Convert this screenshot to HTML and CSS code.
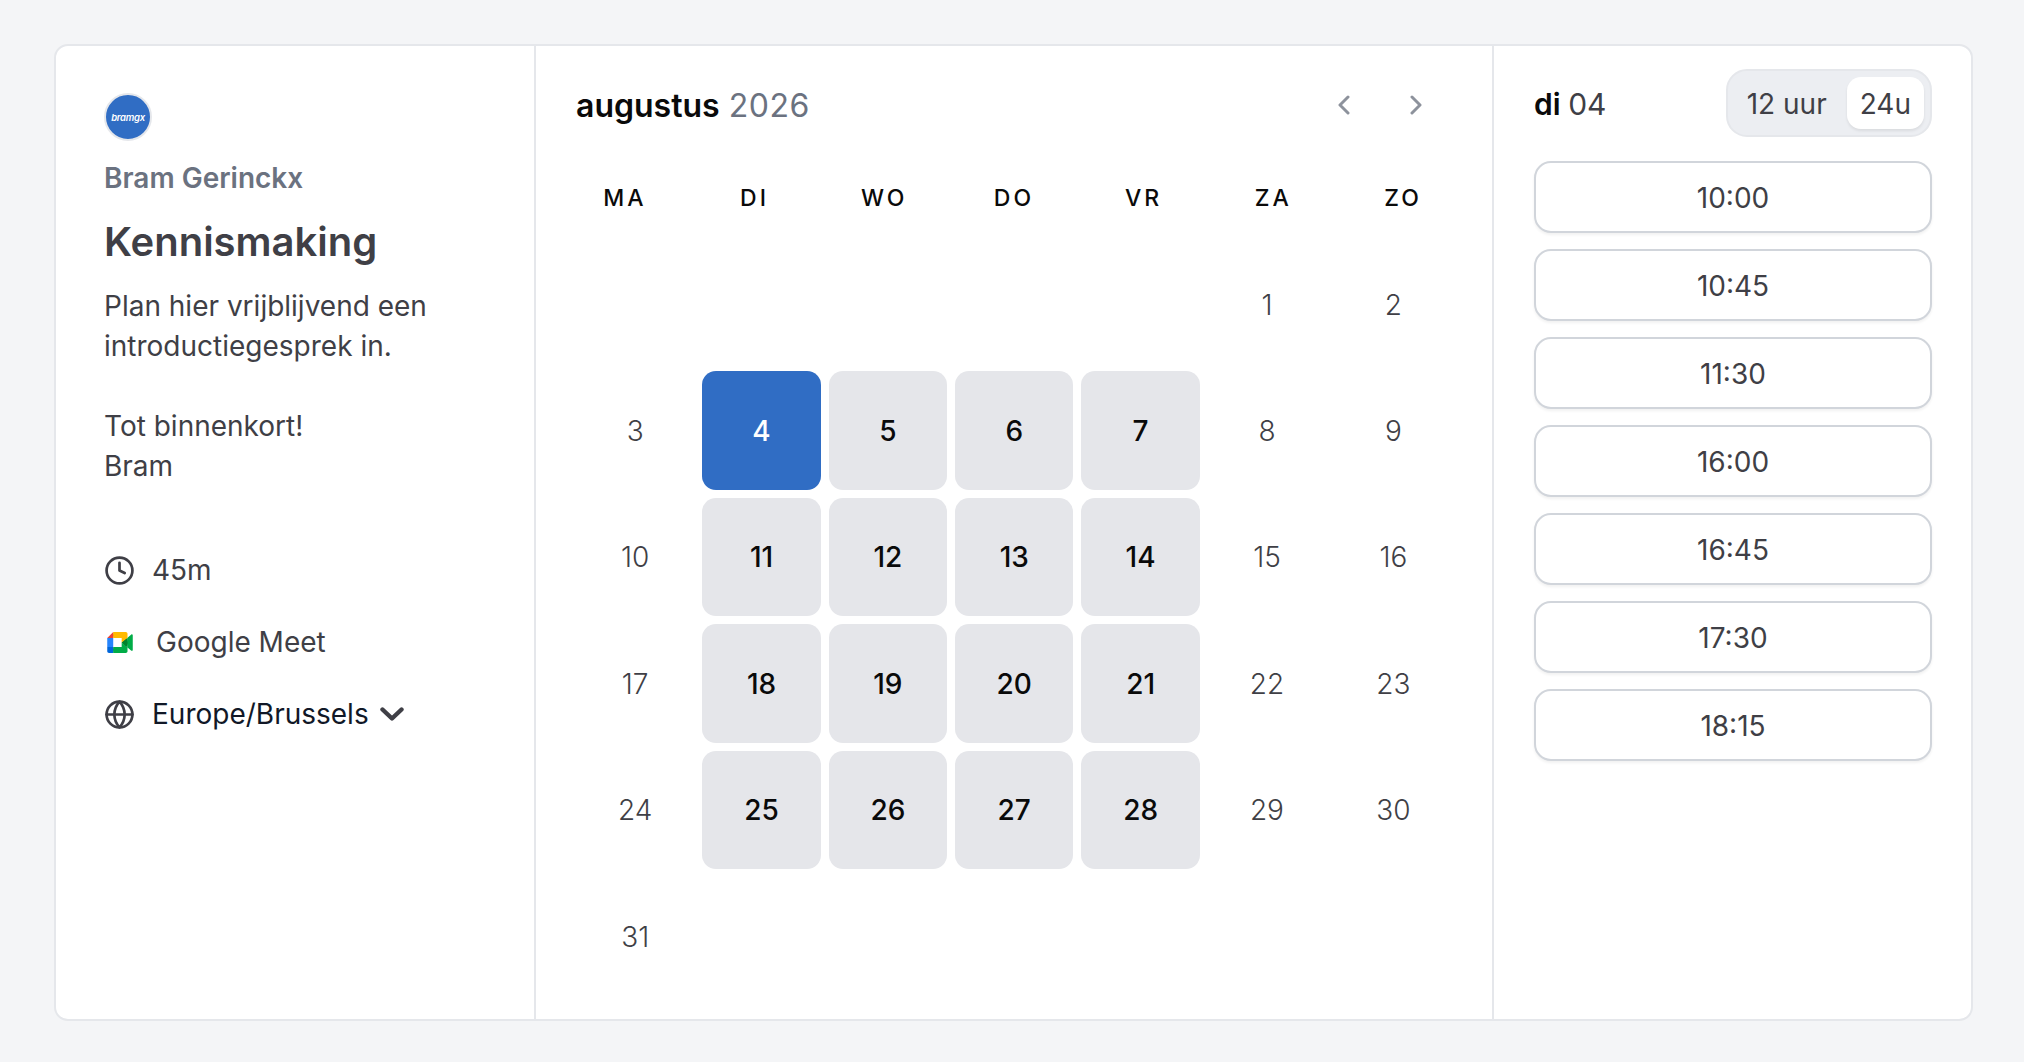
FILE: index.html
```html
<!DOCTYPE html>
<html lang="nl">
<head>
  <meta charset="UTF-8">
  <meta name="viewport" content="width=device-width, initial-scale=1.0">
  <title>Kennismaking - Bram Gerinckx</title>
  <link rel="stylesheet" href="styles.css">
</head>
<body>
  <div class="booker">
    <!-- event info -->
    <aside class="info">
      <div class="avatar"><span>bramgx</span></div>
      <p class="host">Bram Gerinckx</p>
      <h1>Kennismaking</h1>
      <div class="desc">
        <p>Plan hier vrijblijvend een introductiegesprek in.</p>
        <p>Tot binnenkort!<br>Bram</p>
      </div>
      <ul class="meta">
        <li>
          <svg class="icon" viewBox="0 0 24 24" fill="none" stroke="currentColor" stroke-width="2.1" stroke-linecap="round" stroke-linejoin="round"><circle cx="12" cy="12" r="10"/><path d="M12 6v6l4 2"/></svg>
          <span>45m</span>
        </li>
        <li class="meet">
          <svg class="meet-icon" viewBox="0 0 87.5 72"><path fill="#00832d" d="M49.5 36l8.53 9.75 11.47 7.33 2-17.02-2-16.64-11.69 6.44z"/><path fill="#0066da" d="M0 51.5V66c0 3.315 2.685 6 6 6h14.5l3-10.96-3-9.54-9.95-3z"/><path fill="#e94235" d="M20.5 0L0 20.5l10.55 3 9.95-3 2.95-9.41z"/><path fill="#2684fc" d="M20.5 20.5H0v31h20.5z"/><path fill="#00ac47" d="M82.6 8.68L69.5 19.42v33.66l13.16 10.79c1.97 1.54 4.85.135 4.85-2.37V11c0-2.535-2.945-3.925-4.91-2.32zM49.5 36v15.5h-29V72h43c3.315 0 6-2.685 6-6V53.08z"/><path fill="#ffba00" d="M63.5 0h-43v20.5h29V36l20-16.57V6c0-3.315-2.685-6-6-6z"/></svg>
          <span>Google Meet</span>
        </li>
        <li class="tz">
          <svg class="icon" viewBox="0 0 24 24" fill="none" stroke="currentColor" stroke-width="2.1" stroke-linecap="round" stroke-linejoin="round"><circle cx="12" cy="12" r="10"/><path d="M2 12h20"/><path d="M12 2a15.3 15.3 0 0 1 4 10 15.3 15.3 0 0 1-4 10 15.3 15.3 0 0 1-4-10 15.3 15.3 0 0 1 4-10z"/></svg>
          <span>Europe/Brussels</span>
          <svg class="tz-caret" viewBox="0 0 24 14" fill="none" stroke="currentColor" stroke-width="4.4" stroke-linecap="round" stroke-linejoin="round"><path d="M2.5 2.5 12 11.5l9.5-9"/></svg>
        </li>
      </ul>
    </aside>

    <!-- month -->
    <main class="month">
      <div class="month-head">
        <h2>augustus <span>2026</span></h2>
        <div class="month-nav">
          <svg viewBox="0 0 12 20" fill="none" stroke="currentColor" stroke-width="3" stroke-linecap="round" stroke-linejoin="round"><path d="M10 2 2 10l8 8"/></svg>
          <svg viewBox="0 0 12 20" fill="none" stroke="currentColor" stroke-width="3" stroke-linecap="round" stroke-linejoin="round"><path d="m2 2 8 8-8 8"/></svg>
        </div>
      </div>
      <div class="weekdays">
        <span>MA</span><span>DI</span><span>WO</span><span>DO</span><span>VR</span><span>ZA</span><span>ZO</span>
      </div>
      <div class="days">
        <div></div><div></div><div></div><div></div><div></div>
        <div class="day">1</div><div class="day">2</div>
        <div class="day">3</div><div class="day selected">4</div><div class="day open">5</div><div class="day open">6</div><div class="day open">7</div><div class="day">8</div><div class="day">9</div>
        <div class="day">10</div><div class="day open">11</div><div class="day open">12</div><div class="day open">13</div><div class="day open">14</div><div class="day">15</div><div class="day">16</div>
        <div class="day">17</div><div class="day open">18</div><div class="day open">19</div><div class="day open">20</div><div class="day open">21</div><div class="day">22</div><div class="day">23</div>
        <div class="day">24</div><div class="day open">25</div><div class="day open">26</div><div class="day open">27</div><div class="day open">28</div><div class="day">29</div><div class="day">30</div>
        <div class="day">31</div>
      </div>
    </main>

    <!-- time slots -->
    <section class="slots">
      <div class="slots-head">
        <h3>di <span>04</span></h3>
        <div class="toggle">
          <span>12 uur</span>
          <span class="active">24u</span>
        </div>
      </div>
      <button>10:00</button>
      <button>10:45</button>
      <button>11:30</button>
      <button>16:00</button>
      <button>16:45</button>
      <button>17:30</button>
      <button>18:15</button>
    </section>
  </div>
</body>
</html>
```

FILE: styles.css
```css
* {
  box-sizing: border-box;
}
body {
  font-family: 'Inter', sans-serif;
  margin: 0;
  background: #f4f5f7;
  color: #3f3f46;
  min-height: 100vh;
  padding: 44px 51px 41px 54px;
}
h1, h2, h3, p, ul {
  margin: 0;
  padding: 0;
}
.booker {
  display: grid;
  grid-template-columns: 480px 958px 1fr;
  height: 977px;
  background: #fff;
  border: 2px solid #e5e7eb;
  border-radius: 14px;
}

/* left column */
.info {
  padding: 47px 40px 0 48px;
  border-right: 2px solid #e5e7eb;
}
.avatar {
  width: 48px;
  height: 48px;
  border-radius: 50%;
  background: #306dc4;
  border: 2px solid #e5e7eb;
  color: #fff;
  display: flex;
  align-items: center;
  justify-content: center;
}
.avatar span {
  font-size: 9.5px;
  font-style: italic;
  font-weight: 600;
  letter-spacing: -0.3px;
}
.host {
  font-size: 28px;
  line-height: 40px;
  font-weight: 560;
  color: #6b7280;
  margin-top: 17px;
}
h1 {
  font-size: 40px;
  line-height: 52px;
  font-weight: 600;
  margin-top: 18px;
}
.desc {
  font-size: 28px;
  line-height: 40px;
  margin-top: 18px;
}
.desc p + p {
  margin-top: 40px;
}
.meta {
  list-style: none;
  margin-top: 48px;
  font-size: 28px;
}
.meta li {
  display: flex;
  align-items: center;
  gap: 17px;
  height: 72px;
}
.icon {
  width: 31px;
  height: 31px;
  flex: none;
}
.meet-icon {
  width: 26px;
  height: 21px;
  margin: 0 23px 0 3px;
  flex: none;
}
.meet {
  gap: 0 !important;
}
.tz {
  color: #111827;
}
.tz .icon {
  color: #3f3f46;
}
.tz-caret {
  width: 24px;
  height: 14px;
  margin-left: -6px;
  color: #3f3f46;
}

/* calendar */
.month {
  padding: 0 39.5px 0 40px;
  border-right: 2px solid #e5e7eb;
}
.month-head {
  display: flex;
  justify-content: space-between;
  align-items: center;
  height: 118px;
}
h2 {
  font-size: 32px;
  font-weight: 600;
  color: #0a0a0a;
}
h2 span {
  font-weight: 400;
  letter-spacing: 0.5px;
  margin-left: 1px;
  color: #6b7280;
}
.month-nav {
  display: flex;
  gap: 60px;
  margin-right: 31px;
  color: #8d929c;
}
.month-nav svg {
  width: 12px;
  height: 20px;
}
.weekdays {
  display: grid;
  grid-template-columns: repeat(7, 129.7px);
  margin-left: -16px;
  font-size: 23px;
  font-weight: 500;
  letter-spacing: 3px;
  color: #0a0a0a;
  text-align: center;
  height: 81px;
  padding-top: 20px;
}
.days {
  display: grid;
  grid-template-columns: repeat(7, 1fr);
  grid-auto-rows: 118.4px;
  gap: 8px;
}
.day {
  display: flex;
  align-items: center;
  justify-content: center;
  padding-top: 1px;
  border-radius: 14px;
  font-size: 28px;
  font-weight: 300;
}
.open {
  background: #e5e6ea;
  color: #0a0a0a;
  font-weight: 500;
}
.selected {
  background: #306dc4;
  color: #fff;
  font-weight: 500;
}

/* right column */
.slots {
  padding: 23px 39px 0 40px;
  display: flex;
  flex-direction: column;
}
.slots-head {
  display: flex;
  justify-content: space-between;
  align-items: center;
  margin-bottom: 24px;
}
h3 {
  font-size: 30px;
  font-weight: 600;
  color: #0a0a0a;
  padding-top: 2px;
}
h3 span {
  font-weight: 400;
  color: #3f3f46;
}
.toggle {
  display: flex;
  align-items: center;
  height: 68px;
  padding: 1px 6px 0 19px;
  gap: 20px;
  font-size: 28px;
  background: #eceef2;
  border: 2px solid #e5e7eb;
  border-radius: 21px;
}
.toggle .active {
  display: flex;
  align-items: center;
  height: 52px;
  margin-top: -1px;
  padding: 1px 13px 0;
  background: #fff;
  border-radius: 14px;
  box-shadow: 0 2px 3px rgba(0, 0, 0, 0.08);
}
button {
  font-family: inherit;
  font-size: 28px;
  font-weight: 400;
  color: #3f3f46;
  height: 72px;
  margin-bottom: 16px;
  padding-top: 2px;
  background: #fff;
  border: 2px solid #d1d5db;
  border-radius: 17px;
  box-shadow: 0 2px 3px rgba(0, 0, 0, 0.06);
}
```
